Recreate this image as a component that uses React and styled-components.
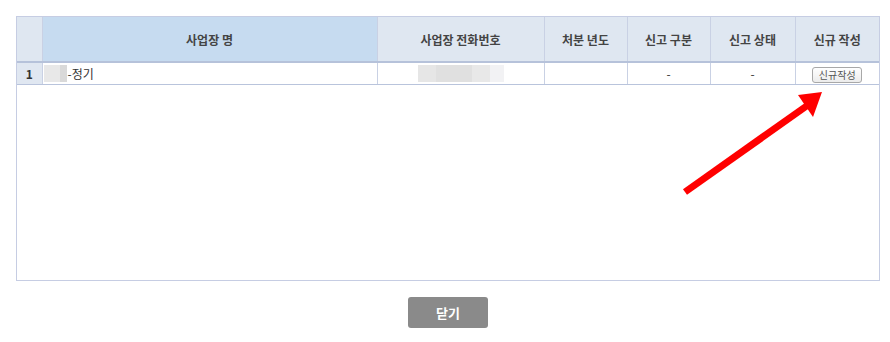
import React from "react";
import styled, { createGlobalStyle } from "styled-components";

const GlobalStyle = createGlobalStyle`
  html, body { margin: 0; padding: 0; background: #fff; }
  body { font-family: "Noto Sans CJK KR", "Noto Sans", sans-serif; color: #333; }
`;

const Page = styled.div`
  width: 890px;
  height: 342px;
  box-sizing: border-box;
  padding: 16px 0 0 16px;
  position: relative;
`;

const GridBox = styled.div`
  width: 864px;
  height: 265px;
  box-sizing: border-box;
  border: 1px solid #c6cde3;
  background: #fff;
`;

const Table = styled.table`
  width: 862px;
  border-collapse: collapse;
  table-layout: fixed;
  font-size: 12px;
`;

const Th = styled.th`
  height: 44px;
  padding: 0;
  font-weight: bold;
  color: #444;
  background: ${(p) => (p.$active ? "#c6dbf0" : "#dfe7f1")};
  border-right: 1px solid #c9d1e4;
  border-bottom: 2px solid #b6c2da;
  &:last-child { border-right: none; }
`;

const Td = styled.td`
  height: 21px;
  padding: ${(p) => (p.$align === "left" ? "0 4px 0 1px" : "0 4px")};
  color: #333;
  text-align: ${(p) => p.$align || "center"};
  background: ${(p) => (p.$num ? "#e0e7f1" : "#fff")};
  font-weight: ${(p) => (p.$num ? "bold" : "normal")};
  border-right: 1px solid #c9d1e4;
  border-bottom: 1px solid #b9c4dc;
  &:last-child { border-right: none; }
`;

const NameCell = styled.div`
  display: flex;
  align-items: center;
  gap: 1px;
`;

const Masked = styled.span`
  display: inline-block;
  width: ${(p) => p.$w}px;
  height: 17px;
  background: ${(p) => p.$bg};
`;

const MaskGroup = styled.span`
  display: flex;
  justify-content: ${(p) => (p.$center ? "center" : "flex-start")};
`;

const SmallButton = styled.button`
  width: 50px;
  height: 16px;
  padding: 0;
  font-family: inherit;
  font-size: 10px;
  line-height: 14px;
  color: #555;
  border: 1px solid #a8a8a8;
  border-radius: 3px;
  background: linear-gradient(#ffffff, #ececec);
`;

const Footer = styled.div`
  width: 864px;
  display: flex;
  justify-content: center;
  padding-top: 16px;
`;

const CloseButton = styled.button`
  width: 80px;
  height: 31px;
  border: none;
  border-radius: 3px;
  background: #8a8a8a;
  color: #fff;
  font-family: inherit;
  font-size: 13px;
  font-weight: bold;
`;

const Arrow = styled.svg`
  position: absolute;
  left: 0;
  top: 0;
  pointer-events: none;
`;

const columns = [
  { label: "", width: 25 },
  { label: "사업장 명", width: 335, active: true },
  { label: "사업장 전화번호", width: 167 },
  { label: "처분 년도", width: 83 },
  { label: "신고 구분", width: 83 },
  { label: "신고 상태", width: 85 },
  { label: "신규 작성", width: 84 },
];

export default function App() {
  return (
    <Page>
      <GlobalStyle />
      <GridBox>
        <Table>
          <colgroup>
            {columns.map((c, i) => (
              <col key={i} style={{ width: c.width }} />
            ))}
          </colgroup>
          <thead>
            <tr>
              {columns.map((c, i) => (
                <Th key={i} $active={c.active}>{c.label}</Th>
              ))}
            </tr>
          </thead>
          <tbody>
            <tr>
              <Td $num>1</Td>
              <Td $align="left">
                <NameCell>
                  <MaskGroup>
                    <Masked $w={16} $bg="#e8e8e8" />
                    <Masked $w={7} $bg="#d9d9d9" />
                  </MaskGroup>
                  <span>-정기</span>
                </NameCell>
              </Td>
              <Td>
                <MaskGroup $center>
                  <Masked $w={18} $bg="#e6e6e6" />
                  <Masked $w={36} $bg="#e0e0e0" />
                  <Masked $w={18} $bg="#e8e8e8" />
                  <Masked $w={14} $bg="#f2f2f4" />
                </MaskGroup>
              </Td>
              <Td />
              <Td>-</Td>
              <Td>-</Td>
              <Td>
                <SmallButton>신규작성</SmallButton>
              </Td>
            </tr>
          </tbody>
        </Table>
      </GridBox>
      <Footer>
        <CloseButton>닫기</CloseButton>
      </Footer>
      <Arrow width="890" height="342" viewBox="0 0 890 342">
        <line x1="685" y1="192" x2="808" y2="105" stroke="#ff0000" strokeWidth="7" strokeLinecap="butt" />
        <polygon points="798,95 822,92 813,117" fill="#ff0000" />
      </Arrow>
    </Page>
  );
}
